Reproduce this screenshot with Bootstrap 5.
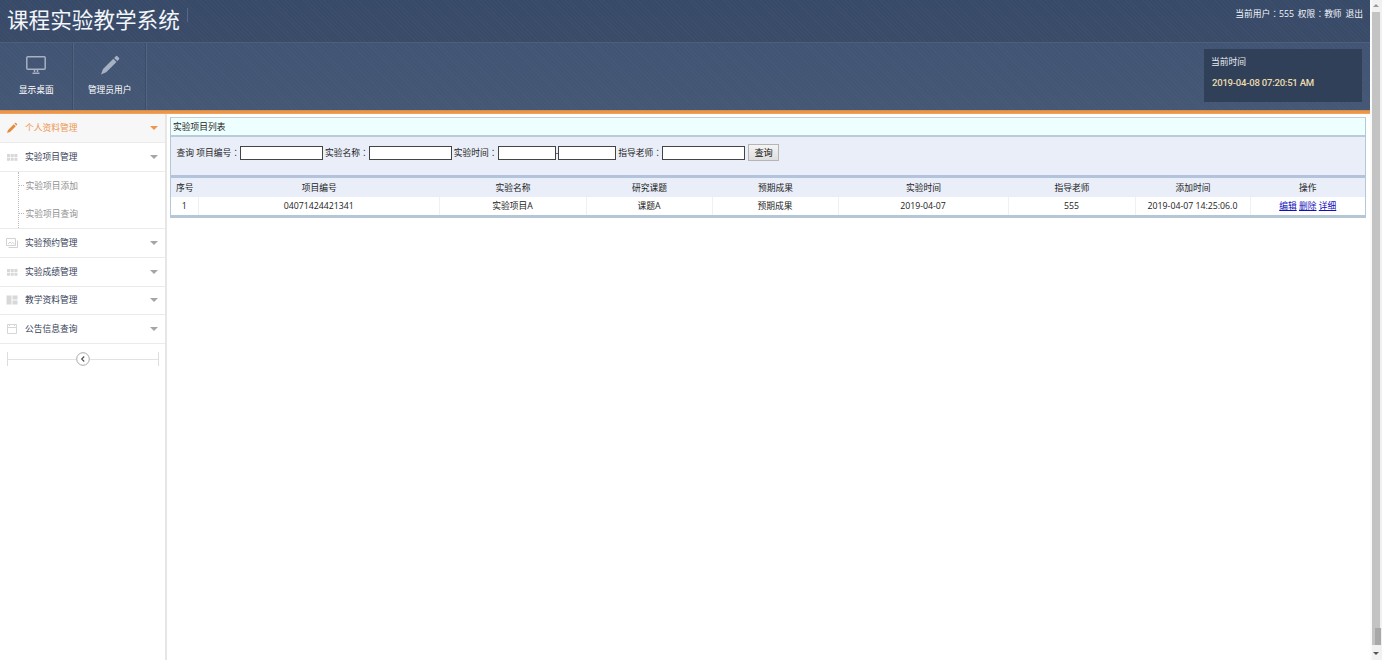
<!DOCTYPE html>
<html lang="zh-CN">
<head>
<meta charset="utf-8">
<title>课程实验教学系统</title>
<link href="https://cdn.jsdelivr.net/npm/bootstrap@5.3.0/dist/css/bootstrap.min.css" rel="stylesheet">
<script src="https://cdn.jsdelivr.net/npm/bootstrap@5.3.0/dist/js/bootstrap.bundle.min.js" defer></script>
<style>
body{font:8.75px/12px "Open Sans","Noto Sans CJK SC",sans-serif;color:#222;height:660px;overflow:hidden;background:#fff}
.cl{font-family:"Noto Sans CJK TC",sans-serif;line-height:1}
.top-area{background:repeating-linear-gradient(45deg,#ffffff05 0 1px,transparent 1px 3px),linear-gradient(#374a68,#3a4b68);height:42px;color:#f2f5fa}
.brand{font-size:21.6px;line-height:40px;padding-left:7px;font-weight:400}
.brand-sep{width:1px;height:14px;background:#566889;margin:8px 0 0 7px}
.user-info{padding:8px 7px 0 0;word-spacing:1.6px}
.tool-area{background:repeating-linear-gradient(45deg,#ffffff05 0 1px,transparent 1px 3px),linear-gradient(#425474,#445774);height:68px;border-top:1px solid #4d5f7d;color:#fff}
.tool{width:73.5px;border-right:1px solid #52647f;box-shadow:-1px 0 #3c4d6a inset}
.tool svg{margin-top:11px;height:22px;width:22px;display:block}
.tool span{margin-top:8px}
.clock{width:158px;height:53px;background:#304059;margin:6px 8px 0 0;padding:7px 7px;color:#e8ecf2}
.clock b{font:500 9.6px/12px Roboto,sans-serif;letter-spacing:-.25px;color:#ecdcae;display:block;margin:9px 0 0 1px}
.accent{height:4px;background:linear-gradient(#d18c50 0 1px,#ee9648 1px 3px,#f3ad70)}
.side{width:166.5px;border-right:2px solid #e6e6e6;height:546px}
.menu-item{height:28.75px;border-bottom:1px solid #ebebeb;color:#344055;padding:0 7px 0 6px}
.menu-item svg{width:12px;height:12px;margin-right:7px}
.menu-item.current{background:#f7f7f7;color:#ee9650}
.menu-item .caret{margin-left:auto;border:4px solid transparent;border-top-color:#a5a5a5;border-bottom:0}
.menu-item.current .caret{border-top-color:#ee9650}
.sub{margin-left:18px;border-left:1px dotted #bbb;color:#8f8f8f;height:56.5px}
.sub div{height:28.25px}
.sub div::before{content:"";width:5px;border-top:1px dotted #bbb;margin-right:1.5px}
.sub-wrap{border-bottom:1px solid #ebebeb}
.folder{margin:8px 6px 0 7px;height:14px;border:solid #ddd;border-width:0 1px}
.folder i{height:1px;background:#e2e2e2}
.panel{margin:3px 4px 0 3px;border:1px solid #b3c9da;border-top-color:#c5cfd6;border-bottom:0;width:1196.5px}
.panel-title{height:17px;background:#edfffe;padding:3px 2.5px}
.search{height:40px;background:#e9eef8;border-top:2px solid #b9cadb;padding:7px 0 0 6px;white-space:nowrap}
.search .lbl{padding-left:2px}
.search input{border:1px solid #444;background:#fff;width:83px;height:14px;padding:0;display:block}
.search input.short{width:58px}
.search button{border:1px solid #b5b5b5;background:linear-gradient(#f4f4f4,#dedede);width:31px;height:17px;padding:0;color:#111;line-height:14px;margin-left:3px;font-size:9.2px}
.grid-table{table-layout:fixed;width:100%;border-top:3px solid #b3c3dc;border-bottom:3px solid #b5c6d7;text-align:center;margin:0;border-collapse:separate;border-spacing:0}
.grid-table th{height:19px;background:#e9eef8;font-weight:400;padding:1px 0 0}
.grid-table td{height:18px;padding:0;border-right:1px solid #f0f0f0}
.grid-table td:last-child{border:0}
.grid-table a{color:#1111bb}
.bar{width:12px;background:#f1f1f1;border-left:2px solid #fafafa;height:660px}
.bar .thumb{background:#c3c3c3;width:8px;height:616px}
.bar .mini{background:#a8a8a8;width:6px;height:17px;margin-left:3px;box-shadow:-3px 0 #c3c3c3}
.bar .up,.bar .dn{height:12px;padding:4px 0 0 1px}
.bar .up::before,.bar .dn::before{content:"";display:block;width:0;border:3px solid transparent;border-top:0;border-bottom-color:#999}
.bar .dn{padding-top:7px}.bar .dn::before{border-top:3px solid #555;border-bottom:0}
</style>
</head>
<body class="d-flex">
<div class="flex-grow-1">
<header>
<div class="top-area d-flex">
<div class="brand">课程实验教学系统</div><div class="brand-sep"></div>
<div class="user-info ms-auto">当前用户<span class="cl" lang="zh-TW">：</span>555 权限<span class="cl" lang="zh-TW">：</span>教师 退出</div>
</div>
<div class="tool-area d-flex">
<div class="tool d-flex flex-column align-items-center"><svg viewBox="0 0 22 22" fill="none" stroke="#a6b1c2" stroke-width="1.500"><rect x="1.800" y="2.700" width="18.400" height="12.600" rx="1"/><path d="M9.500 15.500v2.500M12.500 15.500v2.500M7.500 19.300h7"/></svg><span>显示桌面</span></div>
<div class="tool d-flex flex-column align-items-center"><svg viewBox="0 0 22 22" fill="#a6b1c2"><path d="M2 20.500l2-5.500L14.300 4.700l3.200 3.200L7.200 18.300zM15.100 3.900l1.700-1.700q.8-.7 1.600 0l1.500 1.600q.8.800 0 1.600l-1.600 1.700z"/></svg><span>管理员用户</span></div>
<div class="clock ms-auto">当前时间<b>2019-04-08 07:20:51 AM</b></div>
</div>
<div class="accent"></div>
</header>
<div class="d-flex">
<nav class="side flex-shrink-0">
<div class="menu-item current d-flex align-items-center"><svg viewBox="0 0 12 12" fill="#e88a3c"><path d="M1 11l1-3 5.800-5.800 2 2L4 10zM8.400 1.600l.6-.6q.5-.4 1 0l1 1q.4.5 0 1l-.6.6z"/></svg>个人资料管理<span class="caret"></span></div>
<div class="menu-item d-flex align-items-center"><svg viewBox="0 0 12 12" fill="#d8d8d8"><path d="M1 3h3v3H1zM4.700 3h3v3h-3zM8.400 3h3v3h-3zM1 6.700h3v3H1zM4.700 6.700h3v3h-3zM8.400 6.700h3v3h-3z"/></svg>实验项目管理<span class="caret"></span></div>
<div class="sub-wrap"><div class="sub">
<div class="d-flex align-items-center">实验项目添加</div>
<div class="d-flex align-items-center">实验项目查询</div>
</div></div>
<div class="menu-item d-flex align-items-center"><svg viewBox="0 0 12 12" fill="none" stroke="#d2d2d2"><path d="M.5 1.500h9v7h-9zM11.500 3.500v7h-9M2 7l2-2 1.500 1.500 1-1L8.500 7"/></svg>实验预约管理<span class="caret"></span></div>
<div class="menu-item d-flex align-items-center"><svg viewBox="0 0 12 12" fill="#d8d8d8"><path d="M1 3h3v3H1zM4.700 3h3v3h-3zM8.400 3h3v3h-3zM1 6.700h3v3H1zM4.700 6.700h3v3h-3zM8.400 6.700h3v3h-3z"/></svg>实验成绩管理<span class="caret"></span></div>
<div class="menu-item d-flex align-items-center"><svg viewBox="0 0 12 12" fill="#d8d8d8"><path d="M.5 1.500h5v9h-5zM6.500 1.500h5v4h-5zM6.500 6.500h5v4h-5z"/></svg>教学资料管理<span class="caret"></span></div>
<div class="menu-item d-flex align-items-center"><svg viewBox="0 0 12 12" fill="none" stroke="#d6d6d6"><path d="M1.500 1.500h9v9h-9zM1.500 4.500h9M3.500 1v2M8.500 1v2"/></svg>公告信息查询<span class="caret"></span></div>
<div class="folder d-flex align-items-center"><i class="flex-grow-1"></i><svg width="14" height="14" viewBox="0 0 14 14" fill="none"><circle cx="7" cy="7" r="6.300" stroke="#aaa"/><path d="M8.200 4.500L5.700 7l2.500 2.500" stroke="#555" stroke-width="1.200"/></svg><i class="flex-grow-1"></i></div>
</nav>
<main>
<div class="panel">
<div class="panel-title">实验项目列表</div>
<form class="search d-flex align-items-start">
<div class="d-flex align-items-center"><span>查询 项目编号<span class="cl" lang="zh-TW">：</span></span><input><span class="lbl">实验名称<span class="cl" lang="zh-TW">：</span></span><input><span class="lbl">实验时间<span class="cl" lang="zh-TW">：</span></span><input class="short"><span>-</span><input class="short"><span class="lbl">指导老师<span class="cl" lang="zh-TW">：</span></span><input><button type="button">查询</button></div>
</form>
<table class="grid-table">
<colgroup><col style="width:28.500px"><col style="width:240.500px"><col style="width:147px"><col style="width:126px"><col style="width:126px"><col style="width:170px"><col style="width:127px"><col style="width:115px"><col></colgroup>
<tr><th>序号</th><th>项目编号</th><th>实验名称</th><th>研究课题</th><th>预期成果</th><th>实验时间</th><th>指导老师</th><th>添加时间</th><th>操作</th></tr>
<tr><td>1</td><td>04071424421341</td><td>实验项目A</td><td>课题A</td><td>预期成果</td><td>2019-04-07</td><td>555</td><td>2019-04-07 14:25:06.0</td><td><a href="#">编辑</a> <a href="#">删除</a> <a href="#">详细</a></td></tr>
</table>
</div>
</main>
</div>
</div>
<div class="bar"><div class="up"></div><div class="thumb"></div><div class="mini"></div><div class="dn"></div></div>
</body>
</html>
